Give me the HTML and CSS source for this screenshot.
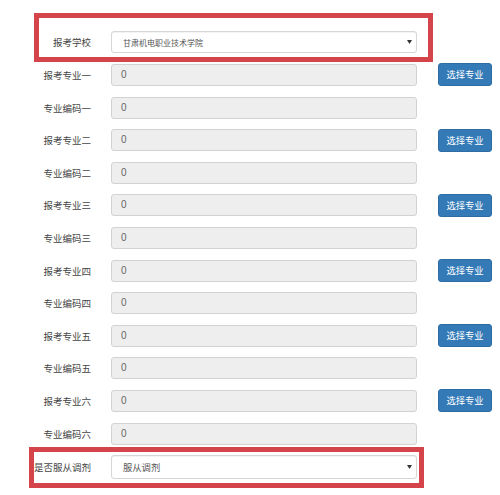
FILE: index.html
```html
<!DOCTYPE html>
<html lang="zh-CN">
<head>
<meta charset="utf-8">
<title>报考信息</title>
<link rel="stylesheet" href="styles.css">
</head>
<body>
<form class="form">
  <div class="row row-first hl">
    <span class="mark mark-top"></span>
    <label class="label">报考学校</label>
    <div class="select select-school"><span class="select-text">甘肃机电职业技术学院</span><svg class="caret" width="5" height="4" viewBox="0 0 5 4"><path d="M0 0H5L2.5 4Z" fill="#333"/></svg></div>
  </div>
  <div class="row"><label class="label">报考专业一</label><div class="input">0</div><button type="button" class="btn">选择专业</button></div>
  <div class="row"><label class="label">专业编码一</label><div class="input">0</div></div>
  <div class="row"><label class="label">报考专业二</label><div class="input">0</div><button type="button" class="btn">选择专业</button></div>
  <div class="row"><label class="label">专业编码二</label><div class="input">0</div></div>
  <div class="row"><label class="label">报考专业三</label><div class="input">0</div><button type="button" class="btn">选择专业</button></div>
  <div class="row"><label class="label">专业编码三</label><div class="input">0</div></div>
  <div class="row"><label class="label">报考专业四</label><div class="input">0</div><button type="button" class="btn">选择专业</button></div>
  <div class="row"><label class="label">专业编码四</label><div class="input">0</div></div>
  <div class="row"><label class="label">报考专业五</label><div class="input">0</div><button type="button" class="btn">选择专业</button></div>
  <div class="row"><label class="label">专业编码五</label><div class="input">0</div></div>
  <div class="row"><label class="label">报考专业六</label><div class="input">0</div><button type="button" class="btn">选择专业</button></div>
  <div class="row"><label class="label">专业编码六</label><div class="input">0</div></div>
  <div class="row row-last hl">
    <span class="mark mark-bottom"></span>
    <label class="label">是否服从调剂</label>
    <div class="select select-adjust"><span class="select-text">服从调剂</span><svg class="caret" width="5" height="4" viewBox="0 0 5 4"><path d="M0 0H5L2.5 4Z" fill="#333"/></svg></div>
  </div>
</form>
</body>
</html>
```
FILE: styles.css
```css
html, body {
  margin: 0;
  padding: 0;
  background: #fff;
}
body {
  font-family: "Noto Sans CJK SC", "Noto Sans", sans-serif;
  color: #444;
  width: 500px;
  height: 495px;
  overflow: hidden;
}
.form {
  display: flex;
  flex-direction: column;
  gap: 10.6px;
  padding-top: 31px;
}
.row {
  display: flex;
  align-items: center;
  height: 22px;
}
.row-first {
  margin-bottom: 0.4px;
}
.row-last {
  height: 24px;
  margin-top: 0;
}
.hl {
  position: relative;
}
.mark {
  position: absolute;
  border: 5px solid #d5434b;
  box-sizing: border-box;
  pointer-events: none;
}
.mark-top {
  left: 34px;
  top: -18px;
  width: 399px;
  height: 49px;
}
.mark-bottom {
  left: 29px;
  top: -8px;
  width: 395px;
  height: 41px;
}
.label {
  width: 91px;
  margin-right: 20px;
  text-align: right;
  font-size: 9.5px;
  line-height: 22px;
  color: #444;
  white-space: nowrap;
  flex: none;
}
.input {
  box-sizing: border-box;
  width: 306px;
  height: 22px;
  background: #eee;
  border: 1px solid #d2d2d2;
  border-radius: 3px;
  padding-left: 9px;
  font-family: "Liberation Sans", sans-serif;
  font-size: 10px;
  line-height: 20px;
  color: #666;
  flex: none;
}
.select {
  box-sizing: border-box;
  width: 306px;
  height: 100%;
  background: #fff;
  border: 1px solid #d6d6d6;
  border-radius: 3px;
  box-shadow: inset 0 1px 1px rgba(0,0,0,0.05);
  display: flex;
  align-items: center;
  justify-content: space-between;
  padding: 0 4px 0 11px;
  flex: none;
}
.select-school .select-text {
  font-size: 8px;
  color: #555;
}
.select-adjust .select-text {
  font-size: 9.3px;
  color: #555;
}
.caret {
  display: block;
}
.btn {
  margin-left: 21px;
  width: 54px;
  height: 23px;
  padding: 0;
  border: 1px solid #2e6da4;
  border-radius: 3px;
  background: #337ab7;
  color: #fff;
  font-family: "Noto Sans CJK SC", sans-serif;
  font-size: 9.3px;
  line-height: 21px;
  text-align: center;
  flex: none;
}
```
